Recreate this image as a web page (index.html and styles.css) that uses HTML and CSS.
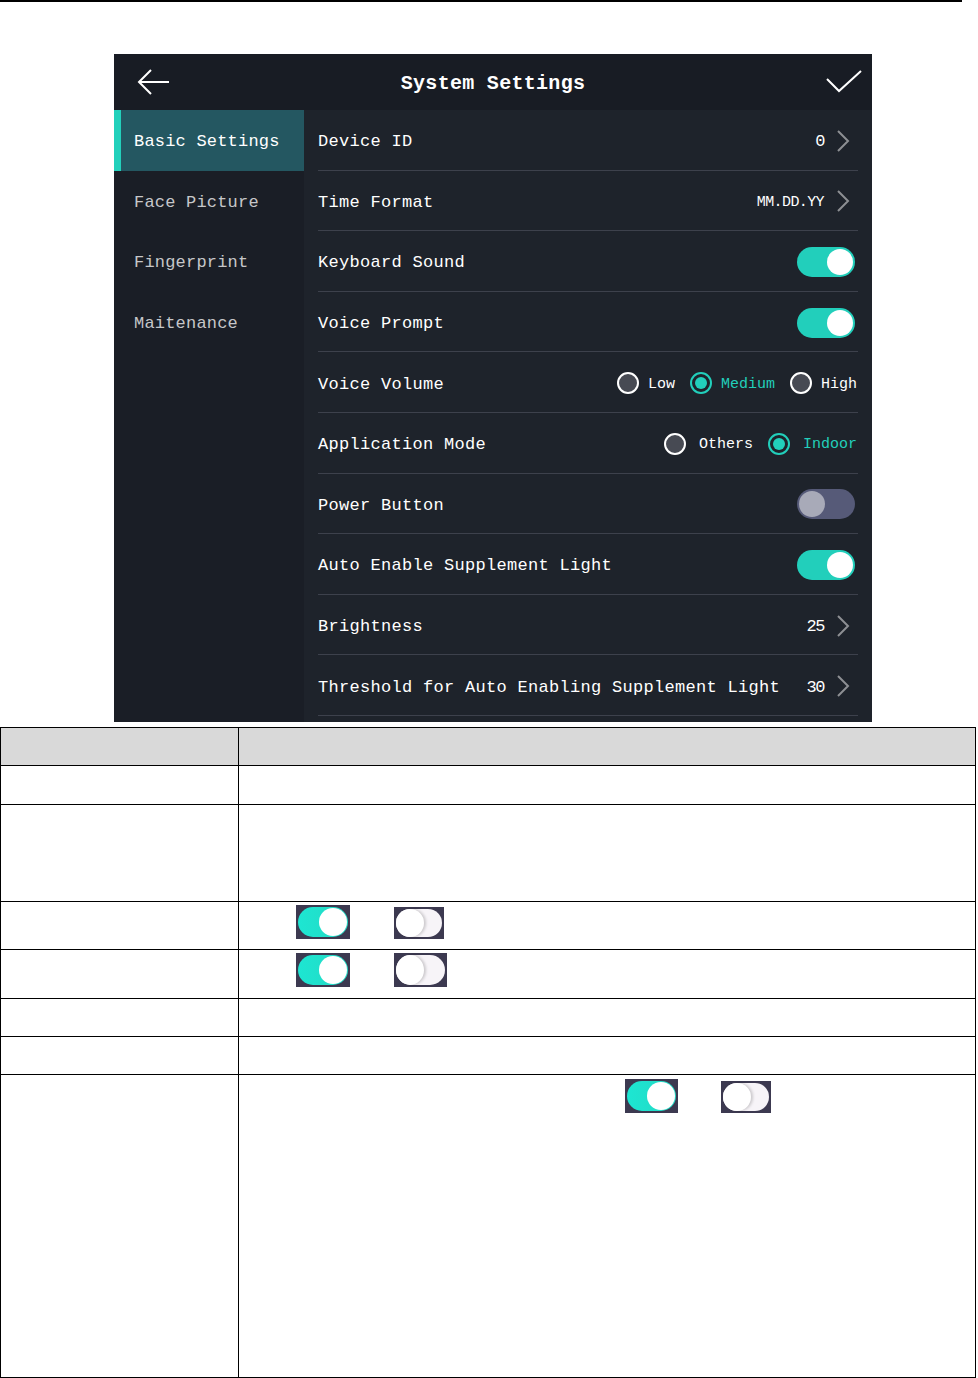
FILE: index.html
```html
<!DOCTYPE html>
<html>
<head>
<meta charset="utf-8">
<link rel="stylesheet" href="styles.css">
</head>
<body>
<div class="topline"></div>
<div class="device">
  <div class="header">
    <svg class="back" width="34" height="28" viewBox="0 0 34 28"><path d="M32 14H3M14 2L2 14L14 26" fill="none" stroke="#fff" stroke-width="2"/></svg>
    <div class="title">System Settings</div>
    <svg class="check" width="36" height="24" viewBox="0 0 36 24"><path d="M1 9L13 21L35 1" fill="none" stroke="#fff" stroke-width="2"/></svg>
  </div>
  <div class="main">
    <div class="sidebar">
      <div class="nav active">Basic Settings</div>
      <div class="nav">Face Picture</div>
      <div class="nav">Fingerprint</div>
      <div class="nav">Maitenance</div>
    </div>
    <div class="content">
      <div class="row"><span class="label">Device ID</span><span class="val"><span class="vt">0</span><svg class="chev" width="14" height="24" viewBox="0 0 14 24"><path d="M2 2L12 12L2 22" fill="none" stroke="#8d8f93" stroke-width="2"/></svg></span></div>
      <div class="row"><span class="label">Time Format</span><span class="val"><span class="vt cond">MM.DD.YY</span><svg class="chev" width="14" height="24" viewBox="0 0 14 24"><path d="M2 2L12 12L2 22" fill="none" stroke="#8d8f93" stroke-width="2"/></svg></span></div>
      <div class="row"><span class="label">Keyboard Sound</span><span class="toggle on"><span class="knob"></span></span></div>
      <div class="row"><span class="label">Voice Prompt</span><span class="toggle on"><span class="knob"></span></span></div>
      <div class="row"><span class="label">Voice Volume</span>
        <span class="radios">
          <span class="opt"><span class="radio"></span><span class="rt">Low</span></span>
          <span class="opt sel"><span class="radio"></span><span class="rt">Medium</span></span>
          <span class="opt"><span class="radio"></span><span class="rt">High</span></span>
        </span>
      </div>
      <div class="row"><span class="label">Application Mode</span>
        <span class="radios wide">
          <span class="opt"><span class="radio"></span><span class="rt">Others</span></span>
          <span class="opt sel"><span class="radio"></span><span class="rt">Indoor</span></span>
        </span>
      </div>
      <div class="row"><span class="label">Power Button</span><span class="toggle off"><span class="knob"></span></span></div>
      <div class="row"><span class="label">Auto Enable Supplement Light</span><span class="toggle on"><span class="knob"></span></span></div>
      <div class="row"><span class="label">Brightness</span><span class="val"><span class="vt">25</span><svg class="chev" width="14" height="24" viewBox="0 0 14 24"><path d="M2 2L12 12L2 22" fill="none" stroke="#8d8f93" stroke-width="2"/></svg></span></div>
      <div class="row"><span class="label">Threshold for Auto Enabling Supplement Light</span><span class="val"><span class="vt">30</span><svg class="chev" width="14" height="24" viewBox="0 0 14 24"><path d="M2 2L12 12L2 22" fill="none" stroke="#8d8f93" stroke-width="2"/></svg></span></div>
    </div>
  </div>
</div>
<table class="doc">
  <tr class="h1"><th class="c1"></th><th></th></tr>
  <tr class="r39"><td></td><td></td></tr>
  <tr class="r97"><td></td><td></td></tr>
  <tr class="r48"><td></td><td class="imgs"><span class="timg on"><span class="pill"><span class="k"></span></span></span><span class="timg off"><span class="pill"><span class="k"></span></span></span></td></tr>
  <tr class="r49"><td></td><td class="imgs"><span class="timg on"><span class="pill"><span class="k"></span></span></span><span class="timg off wide"><span class="pill"><span class="k"></span></span></span></td></tr>
  <tr class="r38"><td></td><td></td></tr>
  <tr class="r38"><td></td><td></td></tr>
  <tr class="r303"><td></td><td class="imgs last"><span class="timg on"><span class="pill"><span class="k"></span></span></span><span class="timg off"><span class="pill"><span class="k"></span></span></span></td></tr>
</table>
</body>
</html>
```
FILE: styles.css
```css
html, body { margin: 0; padding: 0; background: #fff; }
body { font-family: "Liberation Mono", "DejaVu Sans Mono", monospace; }

.topline { width: 962px; height: 2px; background: #000; }

.device {
  margin: 52px 0 0 114px;
  width: 758px;
  height: 668px;
  background: #1e232b;
  display: flex;
  flex-direction: column;
}
.header {
  height: 56px;
  flex: none;
  background: #181c24;
  display: flex;
  align-items: center;
  padding: 0 10px 0 23px;
  box-sizing: border-box;
}
.back { margin-top: -1px; }
.title {
  flex: 1;
  text-align: center;
  color: #fff;
  font-size: 20px;
  letter-spacing: 0.3px;
  font-weight: bold;
  padding-right: 11px;
  margin-top: 3px;
}
.check { margin-top: -1px; }

.main { display: flex; flex: 1; }
.sidebar { width: 190px; background: #1a1e26; }
.nav {
  height: 60.6px;
  display: flex;
  align-items: center;
  padding: 3px 0 0 20px;
  color: #c6c7c9;
  font-size: 17px;
  letter-spacing: 0.2px;
  box-sizing: border-box;
}
.nav.active {
  background: #245761;
  color: #fff;
  border-left: 7px solid #22d0bb;
  padding-left: 13px;
}

.content { flex: 1; padding: 0 14px; background: #1e232b; }
.row {
  height: 60.6px;
  box-sizing: border-box;
  border-bottom: 1px solid #3d414c;
  display: flex;
  align-items: center;
  justify-content: space-between;
  color: #fff;
  font-size: 17px;
  letter-spacing: 0.3px;
  padding-top: 2px;
}
.label { white-space: nowrap; padding-top: 2px; }
.val { display: flex; align-items: center; gap: 12px; margin-right: 8px; font-size: 17px; letter-spacing: -1.5px; }
.vt { padding-top: 2px; }
.val .cond { font-size: 15px; letter-spacing: -0.6px; }
.chev { display: block; }

.toggle {
  width: 58px; height: 30px;
  border-radius: 15px;
  margin-right: 3px;
  position: relative;
  box-sizing: border-box;
}
.toggle .knob {
  position: absolute;
  top: 2px;
  width: 26px; height: 26px;
  border-radius: 50%;
}
.toggle.on { background: #22cfbb; }
.toggle.on .knob { right: 2px; background: #fff; }
.toggle.off { background: #565a78; }
.toggle.off .knob { left: 2px; background: #a8aab8; }

.radios { display: flex; align-items: center; gap: 15px; font-size: 15px; letter-spacing: 0px; margin-right: 1px; }
.rt { padding-top: 2px; }
.opt { display: flex; align-items: center; gap: 9px; }
.radios.wide { gap: 15px; }
.radios.wide .opt { gap: 13px; }
.radio {
  width: 22px; height: 22px;
  box-sizing: border-box;
  border-radius: 50%;
  border: 2px solid #fff;
  background: #474a53;
  position: relative;
}
.opt.sel .radio { border-color: #22cfbb; background: transparent; }
.opt.sel .radio::after {
  content: "";
  position: absolute;
  left: 3px; top: 3px;
  width: 12px; height: 12px;
  border-radius: 50%;
  background: #22cfbb;
}
.opt.sel .rt { color: #22cfbb; }

.doc {
  margin-top: 5px;
  width: 976px;
  border-collapse: collapse;
  table-layout: fixed;
}
.doc th, .doc td {
  border: 1px solid #000;
  padding: 0;
  vertical-align: top;
  font-size: 0;
  line-height: 0;
}
.doc th { background: #d9d9d9; height: 37px; }
.doc .c1 { width: 237px; }
.r39 td { height: 38px; }
.r38 td { height: 37px; }
.r97 td { height: 96px; }
.r48 td { height: 47px; }
.r49 td { height: 48px; }
.r303 td { height: 302px; }

.doc td.imgs { padding-left: 57px; }
.doc td.imgs.last { padding-left: 386px; }
.timg {
  display: inline-block;
  vertical-align: top;
  background: #3c3950;
  padding: 2px;
  box-sizing: border-box;
  margin-top: 3px;
}
.timg.on { width: 54px; height: 34px; margin-right: 44px; }
.timg.off { width: 50px; height: 32px; margin-top: 5px; }
.timg.off.wide { width: 53px; height: 34px; margin-top: 3px; }
.imgs.last .timg.on { margin-right: 43px; width: 53px; margin-top: 4px; }
.imgs.last .timg.off { margin-top: 6px; }
.timg .pill {
  display: block;
  width: 100%; height: 100%;
  border-radius: 15px;
  position: relative;
}
.timg.on .pill { background: linear-gradient(90deg, #1de6d2, #24d9c4); }
.timg.on .k {
  position: absolute; right: 1px; top: 1px;
  width: 28px; height: 28px; border-radius: 50%;
  background: #fff;
}
.timg.off .pill { background: #f7f4f8; }
.timg.off .k {
  position: absolute; left: 0; top: 0;
  width: 28px; height: 100%; border-radius: 50%;
  background: #fff;
  box-shadow: 2px 0 3px rgba(0,0,0,0.18);
}
```
